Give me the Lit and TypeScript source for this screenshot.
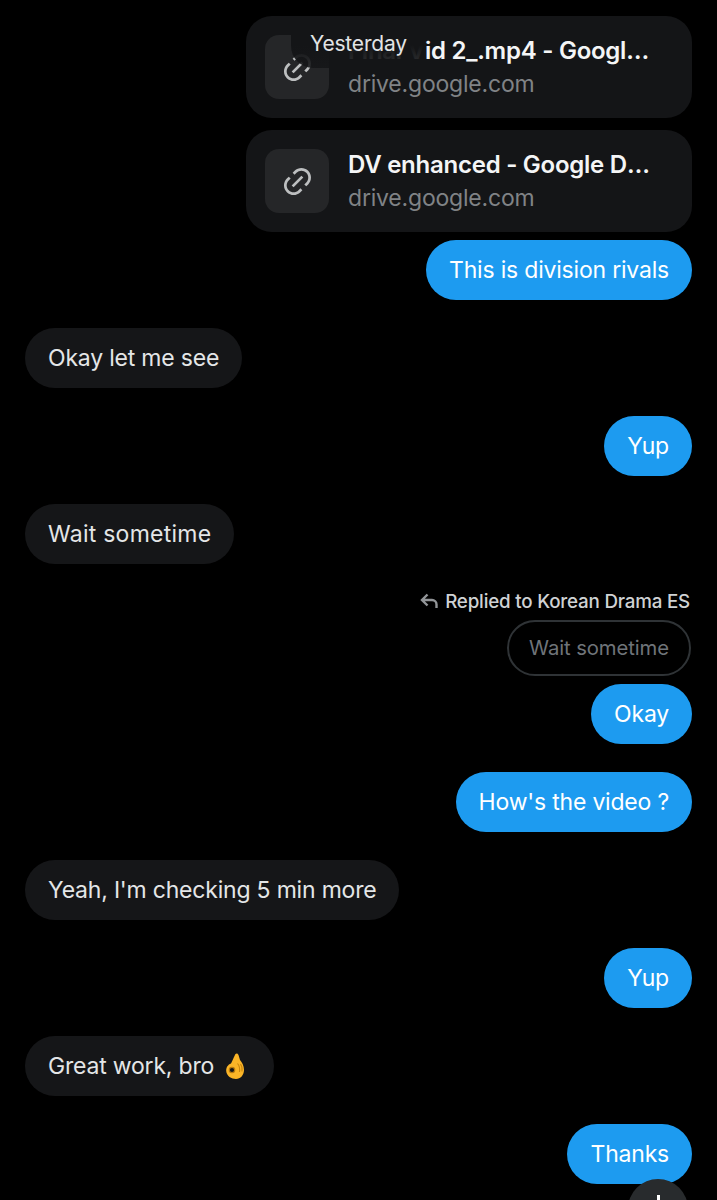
import { LitElement, html, css, svg } from "lit";
import { customElement } from "lit/decorators.js";

const linkPath = svg`<path d="M18.36 5.64c-1.95-1.96-5.11-1.96-7.07 0L9.88 7.05 8.46 5.64l1.42-1.42c2.73-2.73 7.16-2.73 9.9 0 2.73 2.74 2.73 7.17 0 9.9l-1.42 1.42-1.41-1.42 1.41-1.41c1.96-1.96 1.96-5.12 0-7.07zm-2.12 3.53l-7.07 7.07-1.41-1.41 7.07-7.07 1.41 1.41zm-12.02.71l1.42-1.42 1.41 1.42-1.41 1.41c-1.96 1.96-1.96 5.12 0 7.07 1.95 1.96 5.11 1.96 7.07 0l1.41-1.41 1.42 1.41-1.42 1.42c-2.73 2.73-7.16 2.73-9.9 0-2.73-2.74-2.73-7.17 0-9.9z"/>`;

@customElement("app-root")
export class AppRoot extends LitElement {
  static styles = css`
    :host {
      display: block;
      position: relative;
      height: 1200px;
      overflow: hidden;
      background: #000;
      font-family: Inter, "Liberation Sans", sans-serif;
    }

    .thread {
      display: flex;
      flex-direction: column;
      align-items: flex-start;
      padding: 16px 25px 0;
    }

    .bubble {
      height: 60px;
      display: flex;
      align-items: center;
      gap: 9px;
      padding: 0 23px 1px;
      border-radius: 30px;
      font-size: 23px;
      letter-spacing: -0.2px;
      white-space: nowrap;
      box-sizing: border-box;
      margin-top: 28px;
    }
    .in {
      background: #151618;
      color: #e4e6e7;
    }
    .out {
      align-self: flex-end;
      background: #1d9bf0;
      color: #fff;
    }
    .out.tight {
      margin-top: 8px;
    }
    .wide {
      letter-spacing: 0.25px;
    }

    .card {
      align-self: flex-end;
      width: 446px;
      height: 102px;
      display: flex;
      align-items: center;
      gap: 19px;
      padding: 0 19px;
      box-sizing: border-box;
      background: #141517;
      border-radius: 26px;
    }
    .card + .card {
      margin-top: 12px;
    }
    .tile {
      flex: none;
      width: 64px;
      height: 64px;
      display: flex;
      align-items: center;
      justify-content: center;
      background: #252628;
      border-radius: 14px;
    }
    .tile svg {
      width: 33px;
      height: 33px;
      fill: #bdbfc0;
    }
    .meta {
      width: 305px;
      display: flex;
      flex-direction: column;
      gap: 3px;
    }
    .title {
      color: #f4f5f6;
      font-size: 24px;
      font-weight: 600;
      letter-spacing: -0.25px;
      line-height: 30px;
      white-space: nowrap;
      overflow: hidden;
      text-overflow: ellipsis;
    }
    .domain {
      color: #808386;
      font-size: 23px;
      line-height: 30px;
      letter-spacing: -0.2px;
    }

    .reply-label {
      align-self: flex-end;
      display: flex;
      align-items: center;
      gap: 7px;
      margin-top: 25px;
      padding-right: 2px;
      height: 24px;
      color: #cfd2d4;
      font-size: 18.8px;
      font-weight: 500;
      letter-spacing: -0.2px;
    }
    .reply-label svg {
      width: 18px;
      height: 16px;
      fill: none;
      stroke: #929598;
      stroke-width: 2.4;
    }
    .quoted {
      align-self: flex-end;
      height: 56px;
      margin: 7px 1px 0 0;
      padding: 0 20px 2px;
      display: flex;
      align-items: center;
      box-sizing: border-box;
      border: 2px solid #2f3336;
      border-radius: 28px;
      color: #6f7479;
      font-size: 20.3px;
      letter-spacing: -0.1px;
    }

    .emoji {
      width: 20px;
      height: 28px;
      flex: none;
      margin: 1px 6px 0 2px;
    }

    .date-pill {
      position: absolute;
      left: 291px;
      top: 17px;
      width: 134px;
      height: 51px;
      box-sizing: border-box;
      padding-left: 19px;
      padding-top: 13px;
      border-radius: 0 24px 24px 22px;
      background: linear-gradient(180deg, #141517 55%, rgba(20, 21, 23, 0.86) 100%);
      color: #e2e4e5;
      font-size: 21px;
      letter-spacing: -0.2px;
      line-height: 28px;
    }

    .fab {
      position: absolute;
      left: 628px;
      top: 1179px;
      width: 60px;
      height: 60px;
      border-radius: 50%;
      background: #282b2d;
    }
    .fab span {
      position: absolute;
      left: 29px;
      top: 16px;
      width: 3px;
      height: 20px;
      background: #fff;
    }
  `;

  private card(title: string) {
    return html`
      <div class="card">
        <div class="tile"><svg viewBox="0 0 24 24">${linkPath}</svg></div>
        <div class="meta">
          <div class="title">${title}</div>
          <div class="domain">drive.google.com</div>
        </div>
      </div>
    `;
  }

  render() {
    return html`
      <div class="thread">
        ${this.card("Final Vid 2_.mp4 - Google Drive")}
        ${this.card("DV enhanced - Google Drive")}
        <div class="bubble out tight">This is division rivals</div>
        <div class="bubble in">Okay let me see</div>
        <div class="bubble out">Yup</div>
        <div class="bubble in wide">Wait sometime</div>
        <div class="reply-label">
          <svg viewBox="0 0 18 16">
            <path d="M7.5 1.500 2 7l5.500 5.500M2 7h10a4.500 4.500 0 0 1 4.500 4.500V15" />
          </svg>
          Replied to Korean Drama ES
        </div>
        <div class="quoted">Wait sometime</div>
        <div class="bubble out tight">Okay</div>
        <div class="bubble out">How's the video ?</div>
        <div class="bubble in">Yeah, I'm checking 5 min more</div>
        <div class="bubble out">Yup</div>
        <div class="bubble in">
          Great work, bro
          <svg class="emoji" viewBox="0 0 20 28" role="img" aria-label="OK hand">
            <path
              fill="#fbb527"
              d="M10.500 2C11.500.8 13 1.500 13.500 3L15 8c2 2.500 4 5.500 4 10 0 5-3.500 9-8 9s-9.500-3-9.800-8C1 15.500 3 12.500 6 11.500 7 10 9.500 3.500 10.500 2z"
            />
            <circle cx="7" cy="18" r="2.700" fill="#151618" stroke="#b87a0e" stroke-width="1.200" />
            <path fill="none" stroke="#c9860f" stroke-width="1.100" d="M12.500 11.500c1.800 2 2.500 5 2 8.500M15.500 12c1.500 2 2 4.500 1.500 7.500" />
          </svg>
        </div>
        <div class="bubble out">Thanks</div>
      </div>
      <div class="date-pill">Yesterday</div>
      <div class="fab"><span></span></div>
    `;
  }
}
